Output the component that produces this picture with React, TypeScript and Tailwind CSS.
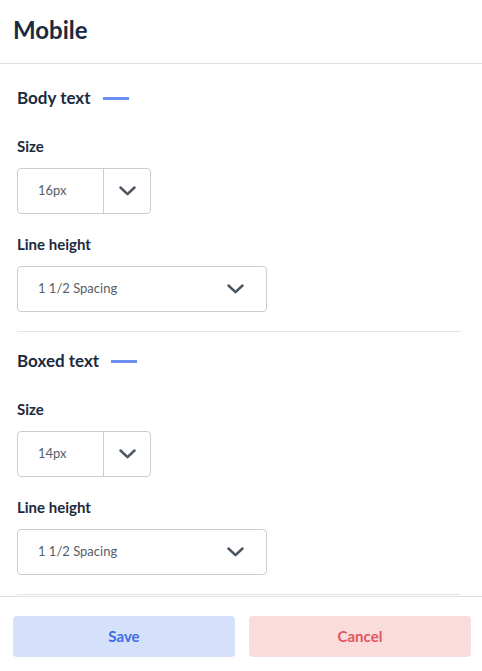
import React from "react";

function Chevron() {
  return (
    <svg width="17" height="10" viewBox="0 0 17 10" fill="none">
      <path d="M1.5 1.5 L8.5 8.2 L15.5 1.5" stroke="#4b5660" strokeWidth="2.5" strokeLinecap="round" strokeLinejoin="round" />
    </svg>
  );
}

function SizeSelect({ value }: { value: string }) {
  return (
    <div className="mt-[12px] flex h-[46px] w-[134px] rounded-[4px] border border-[#c9cdd1] bg-white">
      <div className="flex w-[85px] items-center pl-[20px] text-[13px] text-[#56606a]">{value}</div>
      <div className="flex flex-1 items-center justify-center border-l border-[#c9cdd1]">
        <Chevron />
      </div>
    </div>
  );
}

function LineSelect({ value }: { value: string }) {
  return (
    <div className="mt-[12px] flex h-[46px] w-[250px] items-center justify-between rounded-[4px] border border-[#c9cdd1] bg-white pl-[20px] pr-[22px]">
      <span className="text-[13px] text-[#56606a]">{value}</span>
      <Chevron />
    </div>
  );
}

function Section({ title, size, first }: { title: string; size: string; first?: boolean }) {
  return (
    <div className={`${first ? "pt-[23px]" : "pt-[18px]"} border-b border-[#e2e4e6] pb-[19px]`}>
      <div className="flex h-[22px] items-center">
        <span className="text-[17px] font-bold text-[#1b2a40]">{title}</span>
        <span className="ml-[12px] h-[3px] w-[26px] bg-[#6b8ef2]" />
      </div>
      <div className="mt-[27px] h-[20px] text-[15px] font-bold leading-[20px] text-[#1b2a40]">Size</div>
      <SizeSelect value={size} />
      <div className="mt-[20px] h-[20px] text-[15px] font-bold leading-[20px] text-[#1b2a40]">Line height</div>
      <LineSelect value="1 1/2 Spacing" />
    </div>
  );
}

export default function App() {
  return (
    <div className="flex h-[671px] w-[482px] flex-col bg-white" style={{ fontFamily: "Lato, 'Noto Sans', sans-serif" }}>
      <div className="flex h-[64px] items-center border-b border-[#dedfe0] px-[13px] pb-[4px]">
        <h1 className="text-[24px] font-bold text-[#1b2a40]">Mobile</h1>
      </div>
      <div className="flex-1 overflow-hidden pl-[17px] pr-[21px]">
        <Section title="Body text" size="16px" first />
        <Section title="Boxed text" size="14px" />
      </div>
      <div className="grid h-[75px] grid-cols-2 gap-[14px] border-t border-[#dedfe0] pb-[14px] pl-[13px] pr-[11px] pt-[19px]">
        <button className="rounded-[4px] bg-[#d5e1fa] text-[15px] font-bold text-[#3b6de6]">Save</button>
        <button className="rounded-[4px] bg-[#fadcdd] text-[15px] font-bold text-[#e2575b]">Cancel</button>
      </div>
    </div>
  );
}
